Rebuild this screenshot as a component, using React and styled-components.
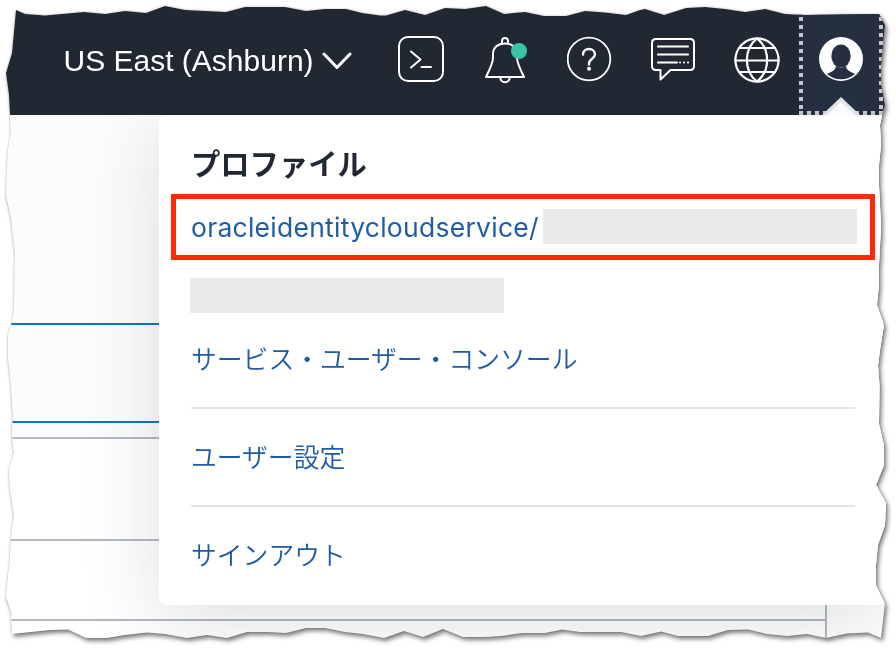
import React from "react";
import styled, { createGlobalStyle } from "styled-components";

const GlobalStyle = createGlobalStyle`
  * { box-sizing: border-box; }
  body { margin: 0; background: #fff; overflow: hidden; }
`;

// Outline of the torn paper, clockwise from the top left corner.
const TOP =
  "16 10,25 14,45 15.5,67 13.5,84 12,105 14,125 11,146 13,165 6,185 10,226 12,245 7,285 7,306 11,325 9,346 9,362 13,380 15.5,386 15.5,405 10,425 15,445 8,465 9,486 6,504 14,525 12,544 16,566 16,585 11,605 12.5,626 15,640 10,645 9,664 15,686 8,705 7,725 9,745 12,765 9,785 14,805 15,879 14";
const RIGHT =
  "885 25,881 65,881 85,885 105,882 115,880 125,881 145,879 165,879 185,881 226,879 265,879 285,877 305,884 325,880 350,878 365,879.5 385,879 424,884 445,884 465,876 485,886 503,885 525,878 545,876 565,876 585,885 604";
const BOTTOM =
  "881 638,868 632.5,847 633.5,826 638,807 634,787 636,767 634,748 629.5,728 630,708 636,678 636,661 631.5,641 636,621 632,580 632,562 629.5,545 633,522 633,501 636,485 637,463 637,443 629,423 637,404 631,384 638,363 634,345 632,325 628,306 628,286 633,267 632,247 632,227 638,207 635,187 638,165 634,147 632.5,125 635,107 638,86 638,68 629.5,50 630,12 634";
const LEFT =
  "11 616,12 615,6 596,10 560,11 540,14 515,10 488,9 470,14 453,12 435,13 415,11 385,8 355,8 335,12 322,14 310,15 253,11 217,6 195,8 150,11 133,9 95,6 73,12 53";
const outline = [TOP, RIGHT, BOTTOM, LEFT]
  .join(",")
  .split(",")
  .map((p) => p.split(" ").map((n) => `${n}px`).join(" "))
  .join(", ");

const PaperShadow = styled.main`
  width: 896px;
  height: 648px;
  filter: drop-shadow(0 0 1px rgba(0, 0, 0, 0.2)) drop-shadow(2px 3px 2px rgba(0, 0, 0, 0.5));
`;

const Paper = styled.div`
  display: flex;
  flex-direction: column;
  height: 100%;
  background: #fff;
  clip-path: polygon(${outline});
`;

const TopBar = styled.header`
  display: grid;
  grid-template-columns: 398px 84px 85px 84px 83px 64px 98px;
  flex: 0 0 115px;
  background: #212832;
  color: #fff;
`;

const Region = styled.button`
  display: flex;
  align-items: center;
  gap: 8px;
  height: 100%;
  margin: 0;
  padding: 7px 0 0 63.5px;
  border: 0;
  background: none;
  color: #fff;
  font: 30px/36px "Liberation Sans", Arial, sans-serif;
  white-space: nowrap;
`;

const IconButton = styled.button`
  display: flex;
  align-items: flex-start;
  margin: 0;
  padding: 34px 0 0;
  border: 0;
  background: none;
  color: #fff;
`;

const ProfileTab = styled.div`
  width: 84px;
  height: 115px;
  margin-left: 1px;
  background: #262f40;
`;

const Glyph = styled.svg`
  display: block;
  flex: none;
  fill: none;
  stroke: currentColor;
  stroke-width: ${(p) => p.$weight || 2};
  stroke-linecap: round;
  stroke-linejoin: round;
`;

const Content = styled.section`
  position: relative;
  flex: 1;
  overflow: hidden;
`;

const Row = styled.div`
  height: ${(p) => p.$height}px;
  margin-right: ${(p) => p.$inset || 0}px;
  background: ${(p) => p.$fill || "#fff"};
  border-bottom: 2px solid ${(p) => p.$line};
  border-right: ${(p) => (p.$inset ? "2px solid #b3b9c1" : "0")};
`;

const Tail = styled.div`
  height: 30px;
  margin-right: 69px;
  border-right: 2px solid #b3b9c1;
`;

const Menu = styled.nav`
  position: absolute;
  left: 159px;
  top: 0;
  width: 728px;
  height: 490px;
  padding: 29px 32px 0;
  border-radius: 8px;
  background: #fff;
  box-shadow: 0 16px 80px rgba(33, 40, 50, 0.15);
`;

const Title = styled.h2`
  margin: 0;
  color: #212832;
  font: 700 29.3px/36px "Noto Sans CJK JP", sans-serif;
`;

const Highlight = styled.div`
  display: flex;
  align-items: center;
  width: 704px;
  height: 66px;
  margin: 14px 0 0 -20.5px;
  padding-left: 15.5px;
  border: 5px solid #ff2a05;
`;

const Identity = styled.a`
  width: 347px;
  color: #205ca5;
  font: 400 26.5px/36px Inter, sans-serif;
  letter-spacing: 0.26px;
  white-space: nowrap;
`;

const Redacted = styled.span`
  display: block;
  width: 314px;
  height: 35px;
  margin: ${(p) => p.$margin};
  background: #eaeaea;
`;

const MenuLink = styled.a`
  display: block;
  height: ${(p) => p.$height}px;
  padding-top: ${(p) => p.$top}px;
  border-bottom: ${(p) => (p.$last ? "0" : "2px solid #e0e4e8")};
  width: 664px;
  color: #205ca5;
  font: 350 25.8px/36px "Noto Sans CJK JP", sans-serif;
  white-space: nowrap;
`;

const ChevronIcon = () => (
  <Glyph width="30" height="20" viewBox="0 0 30 20" $weight={3}>
    <path d="M2 3 L15 16.5 L28 3" />
  </Glyph>
);

const TerminalIcon = () => (
  <Glyph width="48" height="50" viewBox="0 0 48 50">
    <rect x="1" y="3" width="44" height="44" rx="9" />
    <path d="M13 17.5 L22.5 25.5 L13 33.5 M23.5 33 H33" />
  </Glyph>
);

const BellIcon = () => (
  <Glyph width="48" height="52" viewBox="0 0 48 52">
    <path d="M4 43 C8.5 34 11 29 11 24 V20 C11 13.5 16 9.5 23 9.5 S35 13.5 35 20 V24 C35 29 37.5 34 42 43 Z" />
    <path d="M20 9 V7 a3 3 0 0 1 6 0 V9 M18.3 43.5 a4.7 4.7 0 0 0 9.4 0" />
    <circle cx="37" cy="17" r="8" fill="#38c5a5" stroke="none" />
  </Glyph>
);

const HelpIcon = () => (
  <Glyph width="46" height="50" viewBox="0 0 46 50">
    <circle cx="22" cy="25" r="21.3" strokeWidth="1.8" />
    <path strokeWidth="2.4" d="M16 20.5 C16 17 18.7 15 22 15 S28 17.3 28 20.5 C28 24.5 22 25 22 29.5 V30.5" />
    <circle cx="22" cy="34.7" r="2" fill="currentColor" stroke="none" />
  </Glyph>
);

const ChatIcon = () => (
  <Glyph width="46" height="50" viewBox="0 0 46 50">
    <path d="M5 5 H39 Q43 5 43 9 V32 Q43 36 39 36 H19.5 L9.5 45.5 V36 H5 Q1 36 1 32 V9 Q1 5 5 5 Z" />
    <path d="M7 12.5 H37 M7 20.5 H37 M7 28.5 H26" />
    <path d="M29 28.5 H29.1 M33 28.5 H33.1 M37 28.5 H37.1" />
  </Glyph>
);

const GlobeIcon = () => (
  <Glyph width="48" height="50" viewBox="0 0 48 50" $weight={2.2}>
    <circle cx="23" cy="26" r="21.6" />
    <path d="M23 4.4 C9.5 15 9.5 37 23 47.6 C36.5 37 36.5 15 23 4.4 M5.5 14 H40.5 M1.4 26.5 H44.6 M5.5 38 H40.5" />
  </Glyph>
);

const ProfileIcon = () => (
  <svg width="84" height="115" viewBox="0 0 84 115">
    <g fill="none" stroke="#c4c6cb" strokeWidth="4">
      <path d="M2 17 V115 M82 17 V115" strokeDasharray="4 4" />
      <path d="M0 113 H84" strokeDasharray="4 4" />
    </g>
    <circle cx="42" cy="59" r="22" fill="#fff" />
    <ellipse cx="42" cy="56" rx="9.7" ry="11.5" fill="#262f40" />
    <path
      fill="#262f40"
      d="M37 66 Q42 69.5 47 66 C47.5 71 52 71.5 56 74 Q50 79.3 42 79.3 Q34 79.3 28 74 C32 71.5 36.5 71 37 66 Z"
    />
    <path d="M23 115 L42 97 L61 115 Z" fill="#e0e4e7" />
    <path d="M28 115 L42 102 L56 115 Z" fill="#fafafa" />
  </svg>
);

export default function App() {
  return (
    <>
      <GlobalStyle />
      <PaperShadow>
        <Paper>
          <TopBar>
            <Region>
              US East (Ashburn)
              <ChevronIcon />
            </Region>
            <IconButton aria-label="Cloud Shell"><TerminalIcon /></IconButton>
            <IconButton aria-label="Notifications"><BellIcon /></IconButton>
            <IconButton aria-label="Help"><HelpIcon /></IconButton>
            <IconButton aria-label="Chat"><ChatIcon /></IconButton>
            <IconButton aria-label="Language"><GlobeIcon /></IconButton>
            <ProfileTab><ProfileIcon /></ProfileTab>
          </TopBar>
          <Content>
            <Row $height={210} $line="#1271cc" $fill="#fcfcfc" />
            <Row $height={98} $line="#1271cc" $fill="#fcfcfc" />
            <Row $height={16} $line="#b3b9c1" $fill="#fcfcfc" />
            <Row $height={102} $line="#b3b9c1" />
            <Row $height={80} $line="#b3b9c1" $inset={69} />
            <Tail />
            <Menu>
              <Title>プロファイル</Title>
              <Highlight>
                <Identity>oracleidentitycloudservice/</Identity>
                <Redacted $margin="0 0 2px 4.5px" />
              </Highlight>
              <Redacted $margin="17.5px 0 0 -1.5px" />
              <MenuLink $height={96.5} $top={27}>サービス・ユーザー・コンソール</MenuLink>
              <MenuLink $height={98} $top={29}>ユーザー設定</MenuLink>
              <MenuLink $height={90} $top={29} $last>サインアウト</MenuLink>
            </Menu>
          </Content>
        </Paper>
      </PaperShadow>
    </>
  );
}
